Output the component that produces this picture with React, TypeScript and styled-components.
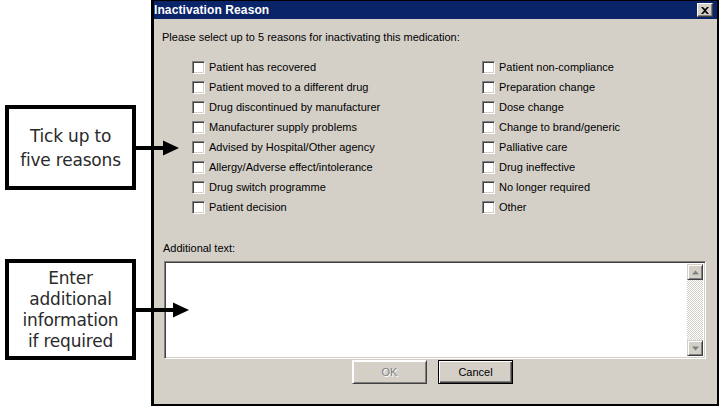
import React from "react";
import styled, { createGlobalStyle } from "styled-components";

const Global = createGlobalStyle`
  html, body { margin: 0; padding: 0; background: #ffffff; }
  body { width: 719px; height: 406px; overflow: hidden; }
`;

const Page = styled.div`
  display: flex;
  width: 719px;
  height: 406px;
`;

const Notes = styled.div`
  position: relative;
  width: 151px;
  flex: none;
  display: flex;
  flex-direction: column;
  z-index: 2;
`;

const Callout = styled.div<{ $top: number; $h: number; $lh: number }>`
  position: relative;
  box-sizing: border-box;
  margin-top: ${(p) => p.$top}px;
  margin-left: 5px;
  width: 131px;
  height: ${(p) => p.$h}px;
  border: 4px solid #000;
  background: #fff;
  display: flex;
  align-items: center;
  justify-content: center;
  text-align: center;
  font-family: "DejaVu Sans", sans-serif;
  font-size: 17px;
  line-height: ${(p) => p.$lh}px;
  color: #2a2a2a;
  letter-spacing: -0.2px;
`;

const ArrowSvg = styled.svg`
  position: absolute;
  left: 100%;
  top: 50%;
  transform: translateY(-50%);
  overflow: visible;
`;

const Arrow = ({ len }: { len: number }) => (
  <ArrowSvg width={len} height={16} viewBox={`0 0 ${len} 16`}>
    <rect x={0} y={6} width={len - 14} height={4} fill="#000" />
    <polygon points={`${len - 16},0.5 ${len},8 ${len - 16},15.5`} fill="#000" />
  </ArrowSvg>
);

const Dialog = styled.div`
  box-sizing: border-box;
  width: 568px;
  height: 406px;
  border-style: solid;
  border-color: #000;
  border-width: 1px 2px 2px 3px;
  background: #d4d0c8;
  display: flex;
  flex-direction: column;
  font-family: "Liberation Sans", Arial, sans-serif;
  font-size: 11px;
  color: #000;
`;

const TitleBar = styled.div`
  height: 18px;
  background: #0a246a;
  display: flex;
  align-items: center;
  justify-content: space-between;
  padding: 0 4px 0 0;
`;

const TitleText = styled.span`
  color: #fff;
  font-weight: bold;
  font-size: 12px;
  letter-spacing: 0.1px;
`;

const CloseBtn = styled.div`
  box-sizing: border-box;
  width: 16px;
  height: 14px;
  background: #d4d0c8;
  border-style: solid;
  border-width: 1px;
  border-color: #fff #404040 #404040 #fff;
  box-shadow: inset -1px -1px #808080;
  display: flex;
  align-items: center;
  justify-content: center;
`;

const Body = styled.div`
  flex: 1;
  display: flex;
  flex-direction: column;
  padding: 12px 8px 0 8px;
`;

const Line = styled.div`
  line-height: 13px;
  white-space: nowrap;
`;

const Grid = styled.div`
  margin-top: 13px;
  margin-left: 30px;
  display: grid;
  grid-template-columns: 290px 1fr;
  grid-template-rows: repeat(8, 20px);
  grid-auto-flow: column;
`;

const Option = styled.label`
  display: flex;
  align-items: center;
  gap: 4px;
  white-space: nowrap;
`;

const Box = styled.span`
  box-sizing: border-box;
  width: 13px;
  height: 13px;
  background: #fff;
  border-style: solid;
  border-width: 1px;
  border-color: #808080 #fff #fff #808080;
  box-shadow: inset 1px 1px #404040, inset -1px -1px #d4d0c8;
  flex: none;
`;

const TextLabel = styled(Line)`
  margin-top: 25px;
  margin-left: 1px;
`;

const TextArea = styled.div`
  box-sizing: border-box;
  margin-top: 6px;
  margin-left: 2px;
  width: 542px;
  height: 98px;
  background: #fff;
  border-style: solid;
  border-width: 1px;
  border-color: #808080 #fff #fff #808080;
  box-shadow: inset 1px 1px #404040, inset -1px -1px #d4d0c8;
  padding: 2px;
  display: flex;
  justify-content: flex-end;
`;

const ScrollBar = styled.div`
  width: 16px;
  display: flex;
  flex-direction: column;
  justify-content: space-between;
  background: repeating-conic-gradient(#d4d0c8 0 25%, #ffffff 0 50%) 0 0 / 2px 2px;
`;

const ScrollBtn = styled.div`
  box-sizing: border-box;
  width: 16px;
  height: 16px;
  background: #d4d0c8;
  border-style: solid;
  border-width: 1px;
  border-color: #d4d0c8 #404040 #404040 #d4d0c8;
  box-shadow: inset 1px 1px #fff, inset -1px -1px #808080;
  display: flex;
  align-items: center;
  justify-content: center;
`;

const Buttons = styled.div`
  margin-top: 1px;
  display: flex;
  justify-content: center;
  gap: 11px;
  padding-right: 6px;
`;

const Button = styled.div<{ $default?: boolean; $disabled?: boolean }>`
  box-sizing: border-box;
  width: 75px;
  height: 24px;
  background: #d4d0c8;
  border: 1px solid ${(p) => (p.$default ? "#000" : "#d4d0c8")};
  box-shadow: ${(p) =>
    p.$default
      ? "inset 1px 1px #fff, inset -1px -1px #404040, inset -2px -2px #808080"
      : "inset 1px 1px #fff, inset -1px -1px #808080"};
  ${(p) => (p.$disabled ? "border-color: #fff #404040 #404040 #fff;" : "")}
  display: flex;
  align-items: center;
  justify-content: center;
  color: ${(p) => (p.$disabled ? "#808080" : "#000")};
  text-shadow: ${(p) => (p.$disabled ? "1px 1px #fff" : "none")};
`;

const left = [
  "Patient has recovered",
  "Patient moved to a different drug",
  "Drug discontinued by manufacturer",
  "Manufacturer supply problems",
  "Advised by Hospital/Other agency",
  "Allergy/Adverse effect/intolerance",
  "Drug switch programme",
  "Patient decision",
];
const right = [
  "Patient non-compliance",
  "Preparation change",
  "Dose change",
  "Change to brand/generic",
  "Palliative care",
  "Drug ineffective",
  "No longer required",
  "Other",
];

export default function App() {
  return (
    <>
      <Global />
      <Page>
        <Notes>
          <Callout $top={105} $h={85} $lh={24}>
            <span>
              Tick up to
              <br />
              five reasons
            </span>
            <Arrow len={47} />
          </Callout>
          <Callout $top={69} $h={101} $lh={21}>
            <span>
              Enter
              <br />
              additional
              <br />
              information
              <br />
              if required
            </span>
            <Arrow len={57} />
          </Callout>
        </Notes>
        <Dialog>
          <TitleBar>
            <TitleText>Inactivation Reason</TitleText>
            <CloseBtn>
              <svg width="8" height="7" viewBox="0 0 8 7">
                <path d="M0 0h2l2 2 2-2h2L5 3.5 8 7H6L4 5 2 7H0l3-3.5z" fill="#000" />
              </svg>
            </CloseBtn>
          </TitleBar>
          <Body>
            <Line>Please select up to 5 reasons for inactivating this medication:</Line>
            <Grid>
              {[...left, ...right].map((t) => (
                <Option key={t}>
                  <Box />
                  <span>{t}</span>
                </Option>
              ))}
            </Grid>
            <TextLabel>Additional text:</TextLabel>
            <TextArea>
              <ScrollBar>
                <ScrollBtn>
                  <svg width="7" height="5" viewBox="0 0 7 5">
                    <polygon points="3.5,0.5 7,4.5 0,4.5" fill="#808080" />
                  </svg>
                </ScrollBtn>
                <ScrollBtn>
                  <svg width="7" height="5" viewBox="0 0 7 5">
                    <polygon points="0,0.5 7,0.5 3.5,4.5" fill="#808080" />
                  </svg>
                </ScrollBtn>
              </ScrollBar>
            </TextArea>
            <Buttons>
              <Button $disabled>OK</Button>
              <Button $default>Cancel</Button>
            </Buttons>
          </Body>
        </Dialog>
      </Page>
    </>
  );
}
